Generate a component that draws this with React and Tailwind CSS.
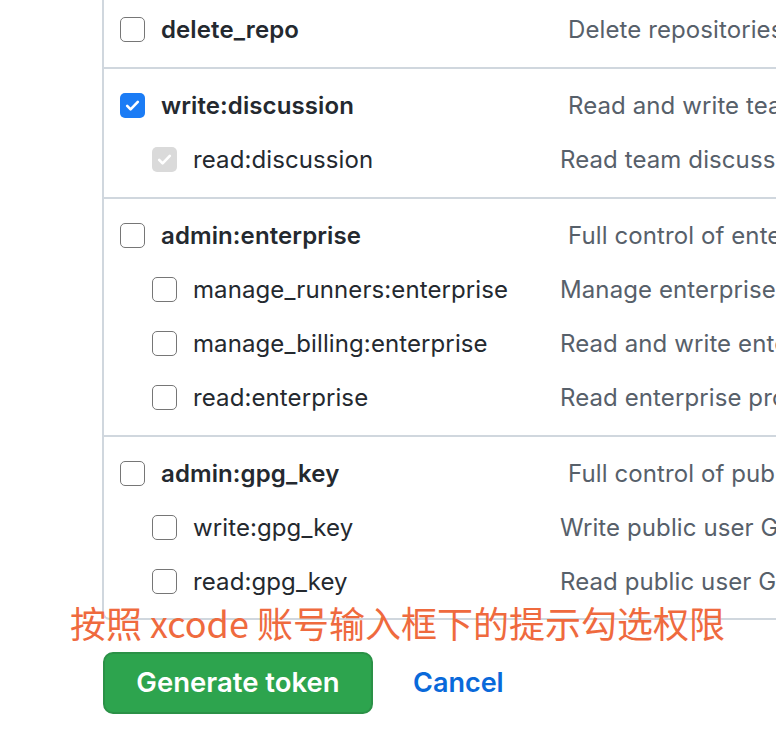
import React from "react";

const font = { fontFamily: "Inter, 'Noto Sans', 'Liberation Sans', sans-serif" };

function Box({ state }) {
  if (state === "checked") {
    return (
      <span className="flex h-[25px] w-[25px] shrink-0 items-center justify-center rounded-[5px] bg-[#1b7cf5]">
        <svg width="17" height="17" viewBox="0 0 16 16" fill="none">
          <path d="M3 8.4l3.2 3.2L13 4.6" stroke="white" strokeWidth="2.5" strokeLinecap="round" strokeLinejoin="round" />
        </svg>
      </span>
    );
  }
  if (state === "disabled") {
    return (
      <span className="flex h-[25px] w-[25px] shrink-0 items-center justify-center rounded-[5px] bg-[#dadada]">
        <svg width="17" height="17" viewBox="0 0 16 16" fill="none">
          <path d="M3 8.4l3.2 3.2L13 4.6" stroke="white" strokeWidth="2.5" strokeLinecap="round" strokeLinejoin="round" />
        </svg>
      </span>
    );
  }
  return <span className="block h-[25px] w-[25px] shrink-0 rounded-[5px] border-[1.5px] border-[#767676] bg-white" />;
}

function Row({ label, desc, sub, state }) {
  return (
    <div className={`flex h-[54px] items-center whitespace-nowrap ${sub ? "pl-[48px]" : "pl-[16px]"}`}>
      <Box state={state} />
      <span
        className={`ml-[16px] shrink-0 pt-[2px] text-[24px] tracking-[0.1px] text-[#24292f] ${sub ? "w-[367px] font-normal" : "w-[407px] font-semibold"}`}
      >
        {label}
      </span>
      <span className="pt-[2px] text-[24px] tracking-[0.1px] text-[#57606a]">{desc}</span>
    </div>
  );
}

export default function App() {
  return (
    <div className="relative h-[744px] w-[776px] overflow-hidden bg-white" style={font}>
      <div className="ml-[102px] w-[800px] rounded-bl-[8px] border-b-2 border-l-2 border-[#d0d7de]">
        <div className="pt-[2px] pb-[11px]">
          <Row label="delete_repo" desc="Delete repositories" />
        </div>
        <div className="border-t-2 border-[#d0d7de] pt-[9px] pb-[11px]">
          <Row label="write:discussion" desc="Read and write team discussions" state="checked" />
          <Row label="read:discussion" desc="Read team discussions" sub state="disabled" />
        </div>
        <div className="border-t-2 border-[#d0d7de] pt-[9px] pb-[11px]">
          <Row label="admin:enterprise" desc="Full control of enterprises" />
          <Row label="manage_runners:enterprise" desc="Manage enterprise runners and runner groups" sub />
          <Row label="manage_billing:enterprise" desc="Read and write enterprise billing data" sub />
          <Row label="read:enterprise" desc="Read enterprise profile data" sub />
        </div>
        <div className="border-t-2 border-[#d0d7de] pt-[9px] pb-[10px]">
          <Row label="admin:gpg_key" desc="Full control of public user GPG keys" />
          <Row label="write:gpg_key" desc="Write public user GPG keys" sub />
          <Row label="read:gpg_key" desc="Read public user GPG keys" sub />
        </div>
      </div>

      <div className="ml-[103px] mt-[32px] flex items-center">
        <button className="h-[62px] w-[270px] rounded-[10px] border-2 border-[#2b9147] bg-[#2da44e] text-[27.5px] font-semibold text-white">
          Generate token
        </button>
        <span className="ml-[40px] text-[27px] font-semibold text-[#0969da]">Cancel</span>
      </div>

      <div
        className="absolute left-[70px] top-[598px] whitespace-nowrap text-[36px] leading-[48px] text-[#ef6a3e]"
        style={{ fontFamily: "'Noto Sans CJK SC', 'Noto Sans', sans-serif" }}
      >
        按照 xcode 账号输入框下的提示勾选权限
      </div>
    </div>
  );
}
